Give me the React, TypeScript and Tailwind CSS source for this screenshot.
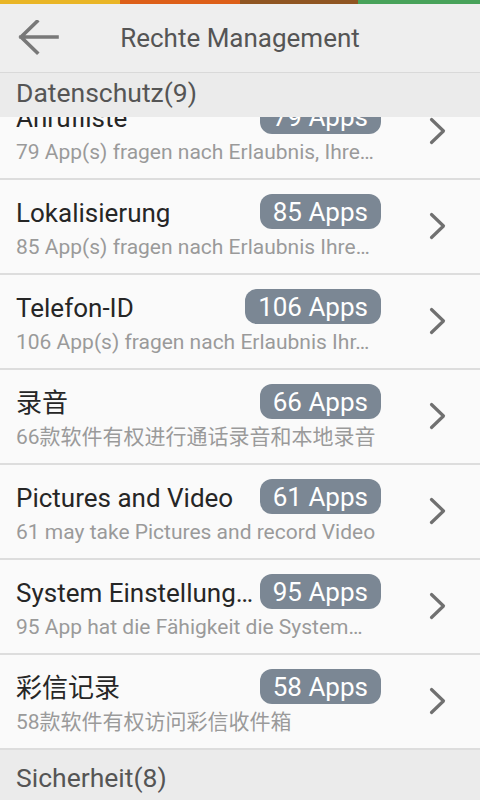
import React from "react";

type Row = { title: string; count: string; sub: string; cjk?: boolean };

const rows: Row[] = [
  { title: "Anrufliste", count: "79 Apps", sub: "79 App(s) fragen nach Erlaubnis, Ihre…" },
  { title: "Lokalisierung", count: "85 Apps", sub: "85 App(s) fragen nach Erlaubnis Ihre…" },
  { title: "Telefon-ID", count: "106 Apps", sub: "106 App(s) fragen nach Erlaubnis Ihr…" },
  { title: "录音", count: "66 Apps", sub: "66款软件有权进行通话录音和本地录音" },
  { title: "Pictures and Video", count: "61 Apps", sub: "61 may take Pictures and record Video" },
  { title: "System Einstellung…", count: "95 Apps", sub: "95 App hat die Fähigkeit die System…" },
  { title: "彩信记录", count: "58 Apps", sub: "58款软件有权访问彩信收件箱" },
];

function Chevron() {
  return (
    <svg width="18" height="28" viewBox="0 0 18 28" fill="none">
      <path d="M2.5 2.5 L14.5 14 L2.5 25.5" stroke="#707070" strokeWidth="3.2" strokeLinecap="round" strokeLinejoin="round" />
    </svg>
  );
}

function ListRow({ r }: { r: Row }) {
  return (
    <div className="flex h-[95px] shrink-0 border-b-2 border-[#dddddd] bg-[#fafafa] pl-[16px]">
      <div className="flex w-[365px] flex-col pt-[14px]">
        <div className="flex h-[35px] items-center">
          <div className="min-w-0 flex-1 overflow-hidden whitespace-nowrap pt-[4px] text-[26px] leading-[35px] text-[#262626]">
            {r.title}
          </div>
          <div className="ml-[5px] flex h-[35px] shrink-0 items-center rounded-[12px] bg-[#7b8794] px-[13px] text-[26px] leading-none text-white">
            {r.count}
          </div>
        </div>
        <div className="overflow-hidden whitespace-nowrap pt-[3px] text-[21px] leading-[30px] text-[#9a9a9a]">
          {r.sub}
        </div>
      </div>
      <div className="flex flex-1 items-center pb-[2px] pl-[48px]">
        <Chevron />
      </div>
    </div>
  );
}

export default function App() {
  return (
    <div className="flex h-[800px] w-[480px] flex-col overflow-hidden bg-[#fafafa] font-['Roboto','Noto_Sans_CJK_SC',sans-serif]">
      <div className="flex h-[4px] shrink-0">
        <div className="w-[120px] bg-[#e9b526]" />
        <div className="w-[120px] bg-[#dd5f18]" />
        <div className="w-[118px] bg-[#8f5522]" />
        <div className="flex-1 bg-[#48a25a]" />
      </div>
      <div className="grid h-[69px] shrink-0 grid-cols-[80px_1fr_80px] items-center border-b border-[#d9d9d9] bg-[#eeeeee]">
        <div className="flex items-center pl-[18px]">
          <svg width="42" height="36" viewBox="0 0 42 36" fill="none">
            <path d="M3 17 H39 M19 1.5 L3 17 L19 32.5" stroke="#787878" strokeWidth="3.6" strokeLinecap="square" />
          </svg>
        </div>
        <div className="text-center text-[26px] leading-none text-[#555555]">Rechte Management</div>
        <div />
      </div>
      <div className="flex h-[44px] shrink-0 items-center bg-[#ebebeb] pb-[4px] pl-[16px] text-[26.5px] leading-none text-[#555555]">
        Datenschutz(9)
      </div>
      <div className="flex-1 overflow-hidden">
        <div className="mt-[-32px] flex flex-col">
          {rows.map((r) => (
            <ListRow key={r.title} r={r} />
          ))}
          <div className="flex h-[56px] shrink-0 items-center bg-[#ebebeb] pl-[16px] text-[26.5px] leading-none text-[#555555]">
            Sicherheit(8)
          </div>
        </div>
      </div>
    </div>
  );
}
